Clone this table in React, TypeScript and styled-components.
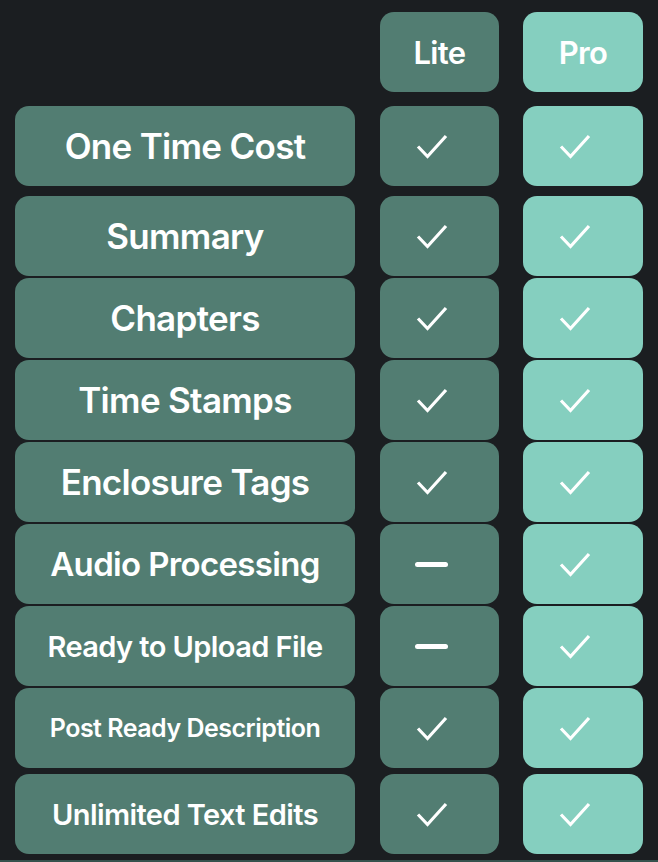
import React from 'react';
import styled, { createGlobalStyle } from 'styled-components';

type Mark = 'check' | 'dash';

interface Feature {
  name: string;
  size: number;
  lite: Mark;
  pro: Mark;
  space: number;
}

const FEATURES: Feature[] = [
  { name: 'One Time Cost', size: 35, lite: 'check', pro: 'check', space: 14 },
  { name: 'Summary', size: 35, lite: 'check', pro: 'check', space: 10 },
  { name: 'Chapters', size: 35, lite: 'check', pro: 'check', space: 2 },
  { name: 'Time Stamps', size: 35, lite: 'check', pro: 'check', space: 2 },
  { name: 'Enclosure Tags', size: 35, lite: 'check', pro: 'check', space: 2 },
  { name: 'Audio Processing', size: 33, lite: 'dash', pro: 'check', space: 2 },
  { name: 'Ready to Upload File', size: 29, lite: 'dash', pro: 'check', space: 2 },
  { name: 'Post Ready Description', size: 25, lite: 'check', pro: 'check', space: 2 },
  { name: 'Unlimited Text Edits', size: 29, lite: 'check', pro: 'check', space: 6 },
];

const GlobalStyle = createGlobalStyle`
  html, body {
    margin: 0;
    padding: 0;
    background: #1b1e21;
  }
  body {
    font-family: Inter, "Noto Sans", sans-serif;
    -webkit-font-smoothing: antialiased;
  }
`;

const MarkIcon: React.FC<{ kind: Mark }> = ({ kind }) =>
  kind === 'check' ? (
    <Icon width="32" height="26" viewBox="0 0 32 26">
      <polyline
        points="2,12.5 11.5,22.5 30,2"
        fill="none"
        stroke="#fff"
        strokeWidth="3.2"
        strokeLinecap="butt"
        strokeLinejoin="miter"
      />
    </Icon>
  ) : (
    <Dash />
  );

export default function App() {
  return (
    <Page>
      <GlobalStyle />
      <Table>
        <Row $space={12}>
          <span />
          <Cell $plan="lite">
            <PlanName>Lite</PlanName>
          </Cell>
          <Cell $plan="pro">
            <PlanName>Pro</PlanName>
          </Cell>
        </Row>
        {FEATURES.map((f) => (
          <Row key={f.name} $space={f.space}>
            <Label $size={f.size}>{f.name}</Label>
            <Cell $plan="lite">
              <MarkIcon kind={f.lite} />
            </Cell>
            <Cell $plan="pro">
              <MarkIcon kind={f.pro} />
            </Cell>
          </Row>
        ))}
      </Table>
      <Footer />
    </Page>
  );
}

const Page = styled.div`
  width: 658px;
  display: flex;
  flex-direction: column;
`;

const Table = styled.div`
  display: flex;
  flex-direction: column;
  padding: 0 15px 6px 15px;
`;

const Row = styled.div<{ $space: number }>`
  display: grid;
  grid-template-columns: 340px 120px 120px;
  column-gap: 24px;
  height: 80px;
  margin-top: ${(p) => p.$space}px;

  & > :nth-child(2) {
    margin-left: 1px;
  }
`;

const Label = styled.div<{ $size: number }>`
  background: #527d72;
  border-radius: 14px;
  display: flex;
  align-items: center;
  justify-content: center;
  color: #fff;
  font-size: ${(p) => p.$size}px;
  font-weight: 600;
  letter-spacing: -0.02em;
  white-space: nowrap;
`;

const Cell = styled.div<{ $plan: 'lite' | 'pro' }>`
  background: ${(p) => (p.$plan === 'lite' ? '#527d72' : '#85cfbf')};
  border-radius: 14px;
  display: flex;
  align-items: center;
  justify-content: center;
  color: #fff;
`;

const PlanName = styled.span`
  font-size: 31px;
  font-weight: 600;
  letter-spacing: -0.02em;
`;

const Icon = styled.svg`
  display: block;
  margin-right: 16px;
  margin-top: 2px;
`;

const Dash = styled.div`
  width: 33px;
  height: 5px;
  border-radius: 3px;
  background: #fff;
  margin-right: 17px;
`;

const Footer = styled.div`
  height: 60px;
  background: #35524d;
`;
